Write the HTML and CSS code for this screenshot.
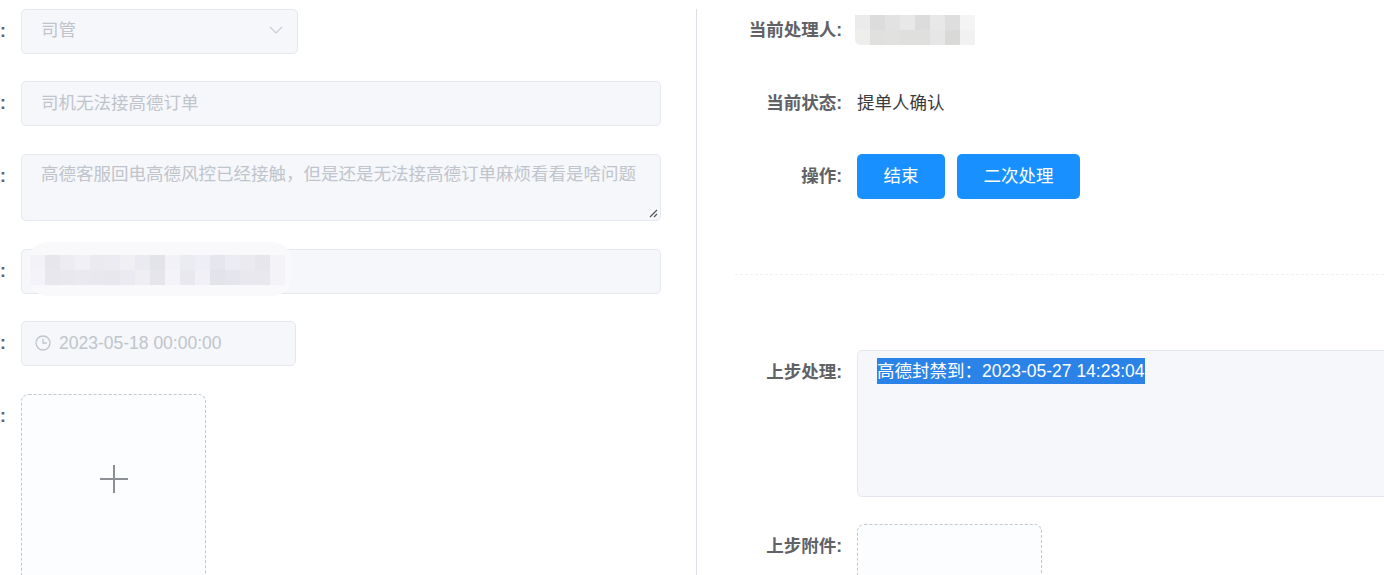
FILE: index.html
```html
<!DOCTYPE html>
<html lang="zh-CN">
<head>
<meta charset="utf-8">
<title>工单处理</title>
<link rel="stylesheet" href="styles.css">
</head>
<body>
<main class="page">
  <section class="left">
    <div class="row">
      <div class="colon">:</div>
      <div class="field narrow select">
        <span>司管</span>
        <svg class="chevron" width="14" height="8" viewBox="0 0 14 8"><path d="M1 1l6 6 6-6" fill="none" stroke="#c8ccd3" stroke-width="1.1"/></svg>
      </div>
    </div>
    <div class="row">
      <div class="colon">:</div>
      <div class="field wide">司机无法接高德订单</div>
    </div>
    <div class="row">
      <div class="colon">:</div>
      <div class="field wide area">高德客服回电高德风控已经接触，但是还是无法接高德订单麻烦看看是啥问题
        <svg class="grip" width="9" height="9" viewBox="0 0 9 9"><path d="M1 8l7-7M5 8l3-3" fill="none" stroke="#555" stroke-width="1.2"/></svg>
      </div>
    </div>
    <div class="row">
      <div class="colon">:</div>
      <div class="field wide">
        <svg class="mosaic mosaic-left" width="264" height="54" viewBox="0 0 264 54" shape-rendering="crispEdges">
          <rect width="264" height="54" rx="20" fill="#f9f9fc" shape-rendering="auto"/>
          <g transform="translate(2 13)">
            <rect x="0" width="15" height="15" fill="#f2f2f8"/><rect x="15" width="15" height="15" fill="#e6e6ec"/><rect x="30" width="15" height="15" fill="#ececf2"/><rect x="45" width="15" height="15" fill="#f0f0f5"/><rect x="60" width="15" height="15" fill="#eaeaf0"/><rect x="75" width="15" height="15" fill="#ebebf1"/><rect x="90" width="15" height="15" fill="#efeff4"/><rect x="105" width="15" height="15" fill="#eaeaf0"/><rect x="120" width="15" height="15" fill="#e3e3ea"/><rect x="135" width="15" height="15" fill="#f1f1f7"/><rect x="150" width="15" height="15" fill="#ebebf2"/><rect x="165" width="15" height="15" fill="#eeeef6"/><rect x="180" width="15" height="15" fill="#e6e6ee"/><rect x="195" width="15" height="15" fill="#ececf3"/><rect x="210" width="15" height="15" fill="#eaeaf0"/><rect x="225" width="15" height="15" fill="#e6e6ec"/><rect x="240" width="15" height="15" fill="#f3f3f8"/>
            <rect x="0" y="15" width="15" height="15" fill="#f3f3f9"/><rect x="15" y="15" width="15" height="15" fill="#e7e7ed"/><rect x="30" y="15" width="15" height="15" fill="#e8e8ee"/><rect x="45" y="15" width="15" height="15" fill="#e9e9ef"/><rect x="60" y="15" width="15" height="15" fill="#e8e8ee"/><rect x="75" y="15" width="15" height="15" fill="#e7e7ed"/><rect x="90" y="15" width="15" height="15" fill="#eaeaf0"/><rect x="105" y="15" width="15" height="15" fill="#eeeef3"/><rect x="120" y="15" width="15" height="15" fill="#e5e5eb"/><rect x="135" y="15" width="15" height="15" fill="#f3f3f9"/><rect x="150" y="15" width="15" height="15" fill="#e8e8ee"/><rect x="165" y="15" width="15" height="15" fill="#f0f0f6"/><rect x="180" y="15" width="15" height="15" fill="#e3e3ec"/><rect x="195" y="15" width="15" height="15" fill="#e5e5ec"/><rect x="210" y="15" width="15" height="15" fill="#e8e8ee"/><rect x="225" y="15" width="15" height="15" fill="#e8e8ee"/><rect x="240" y="15" width="15" height="15" fill="#f3f3f8"/>
          </g>
        </svg>
      </div>
    </div>
    <div class="row">
      <div class="colon">:</div>
      <div class="field date">
        <svg class="clock" width="16" height="16" viewBox="0 0 16 16"><circle cx="8" cy="8" r="7" fill="none" stroke="#c0c4cc" stroke-width="1.3"/><path d="M8 3.8V8h3.8" fill="none" stroke="#c0c4cc" stroke-width="1.3"/></svg>
        <span>2023-05-18 00:00:00</span>
      </div>
    </div>
    <div class="row">
      <div class="colon">:</div>
      <div class="upload upload-add">
        <svg width="30" height="30" viewBox="0 0 30 30"><path d="M1 15h28M15 1v28" fill="none" stroke="#8c9096" stroke-width="2"/></svg>
      </div>
    </div>
  </section>

  <section class="right">
    <div class="row">
      <div class="label label-top">当前处理人:</div>
      <svg class="mosaic mosaic-right" width="120" height="30" viewBox="0 0 120 30" shape-rendering="crispEdges">
        <rect x="0" width="15" height="15" fill="#ebebeb"/><rect x="15" width="15" height="15" fill="#dcdcdc"/><rect x="30" width="15" height="15" fill="#e2e2e2"/><rect x="45" width="15" height="15" fill="#e8e8e8"/><rect x="60" width="15" height="15" fill="#dcdcdc"/><rect x="75" width="15" height="15" fill="#e8e8e8"/><rect x="90" width="15" height="15" fill="#dedede"/><rect x="105" width="15" height="15" fill="#f4f4f4"/>
        <path d="M0 15h15v15H6q-6 0-6-6z" fill="#eeeeec" shape-rendering="auto"/><rect x="15" y="15" width="15" height="15" fill="#e0e0de"/><rect x="30" y="15" width="15" height="15" fill="#e1e1df"/><rect x="45" y="15" width="15" height="15" fill="#dfdfdd"/><rect x="60" y="15" width="15" height="15" fill="#dfdfdd"/><rect x="75" y="15" width="15" height="15" fill="#e6e6e6"/><rect x="90" y="15" width="15" height="15" fill="#d9d9d7"/><rect x="105" y="15" width="15" height="15" fill="#f1f1f1"/>
      </svg>
    </div>
    <div class="row">
      <div class="label label-top">当前状态:</div>
      <div class="value">提单人确认</div>
    </div>
    <div class="row actions-row">
      <div class="label">操作:</div>
      <div class="actions">
        <button class="btn btn-end" type="button">结束</button>
        <button class="btn btn-again" type="button">二次处理</button>
      </div>
    </div>
    <hr class="divider">
    <div class="row prev-row">
      <div class="label">上步处理:</div>
      <div class="field prev"><span class="selected">高德封禁到：2023-05-27 14:23:04</span></div>
    </div>
    <div class="row">
      <div class="label">上步附件:</div>
      <div class="upload"></div>
    </div>
  </section>
</main>
</body>
</html>
```

FILE: styles.css
```css
* {
  box-sizing: border-box;
}

html,
body {
  margin: 0;
  height: 575px;
  overflow: hidden;
  background: #fff;
}

body {
  font-family: "Liberation Sans", "Noto Sans CJK SC", sans-serif;
  font-size: 17.5px;
  color: #606266;
}

.page {
  display: grid;
  grid-template-columns: 696px 1fr;
  height: 575px;
  overflow: hidden;
}

.left {
  padding-top: 8.75px;
}

.right {
  margin-top: 9px;
  border-left: 1px solid #dcdfe6;
  min-width: 0;
}

.row {
  display: flex;
  align-items: flex-start;
  margin-bottom: 27.5px;
  position: relative;
}

.colon {
  width: 21px;
  flex: none;
  line-height: 45px;
  font-weight: 700;
}

.label {
  width: 160px;
  height: 45px;
  flex: none;
  padding-right: 15px;
  text-align: right;
  line-height: 45px;
  font-weight: 700;
}

.label-top {
  line-height: 43px;
}

.value {
  line-height: 43px;
  color: #3a3b3d;
}

.field {
  position: relative;
  height: 45px;
  flex: none;
  padding: 0 19px;
  line-height: 42px;
  color: #c0c4cc;
  background: #f5f7fa;
  border: 1px solid #e4e7ed;
  border-radius: 5px;
}

.narrow {
  width: 277px;
}

.wide {
  width: 640px;
}

.select {
  display: flex;
  align-items: center;
  justify-content: space-between;
  padding-right: 14px;
  padding-bottom: 2px;
}

.chevron {
  flex: none;
}

.area {
  height: 67.25px;
  padding-top: 6px;
  line-height: 26px;
}

.grip {
  position: absolute;
  right: 2px;
  bottom: 2px;
}

.date {
  width: 275px;
  display: flex;
  align-items: center;
  gap: 8px;
  padding-left: 13px;
  line-height: 43px;
}

.clock {
  flex: none;
  margin-top: -1px;
}

.upload {
  width: 185px;
  height: 200px;
  flex: none;
  display: flex;
  justify-content: center;
  background: #fbfdff;
  border: 1px dashed #c4c8cc;
  border-radius: 7.5px;
}

.upload-add {
  padding-top: 69px;
}

.mosaic {
  position: absolute;
  display: block;
}

.mosaic-left {
  left: 6px;
  top: -7.5px;
}

.mosaic-right {
  left: 158px;
  top: 6px;
}

.actions {
  display: flex;
  gap: 12px;
}

.actions-row {
  margin-bottom: 75px;
}

.btn {
  height: 45px;
  padding: 0 0 5px;
  border: 0;
  border-radius: 5px;
  background: #1890ff;
  color: #fff;
  font: inherit;
}

.btn-end {
  width: 88px;
}

.btn-again {
  width: 123px;
}

.divider {
  margin: 0 0 75px 38px;
  height: 0;
  border: 0;
  border-top: 1px dashed #eef0f2;
}

.prev-row {
  margin-bottom: 27px;
}

.prev {
  flex: none;
  width: 640px;
  height: 147px;
  padding-top: 7px;
  line-height: 26px;
  color: #fff;
}

.selected {
  display: inline-block;
  height: 26px;
  background: #2b83e8;
  color: #fff;
}
```
